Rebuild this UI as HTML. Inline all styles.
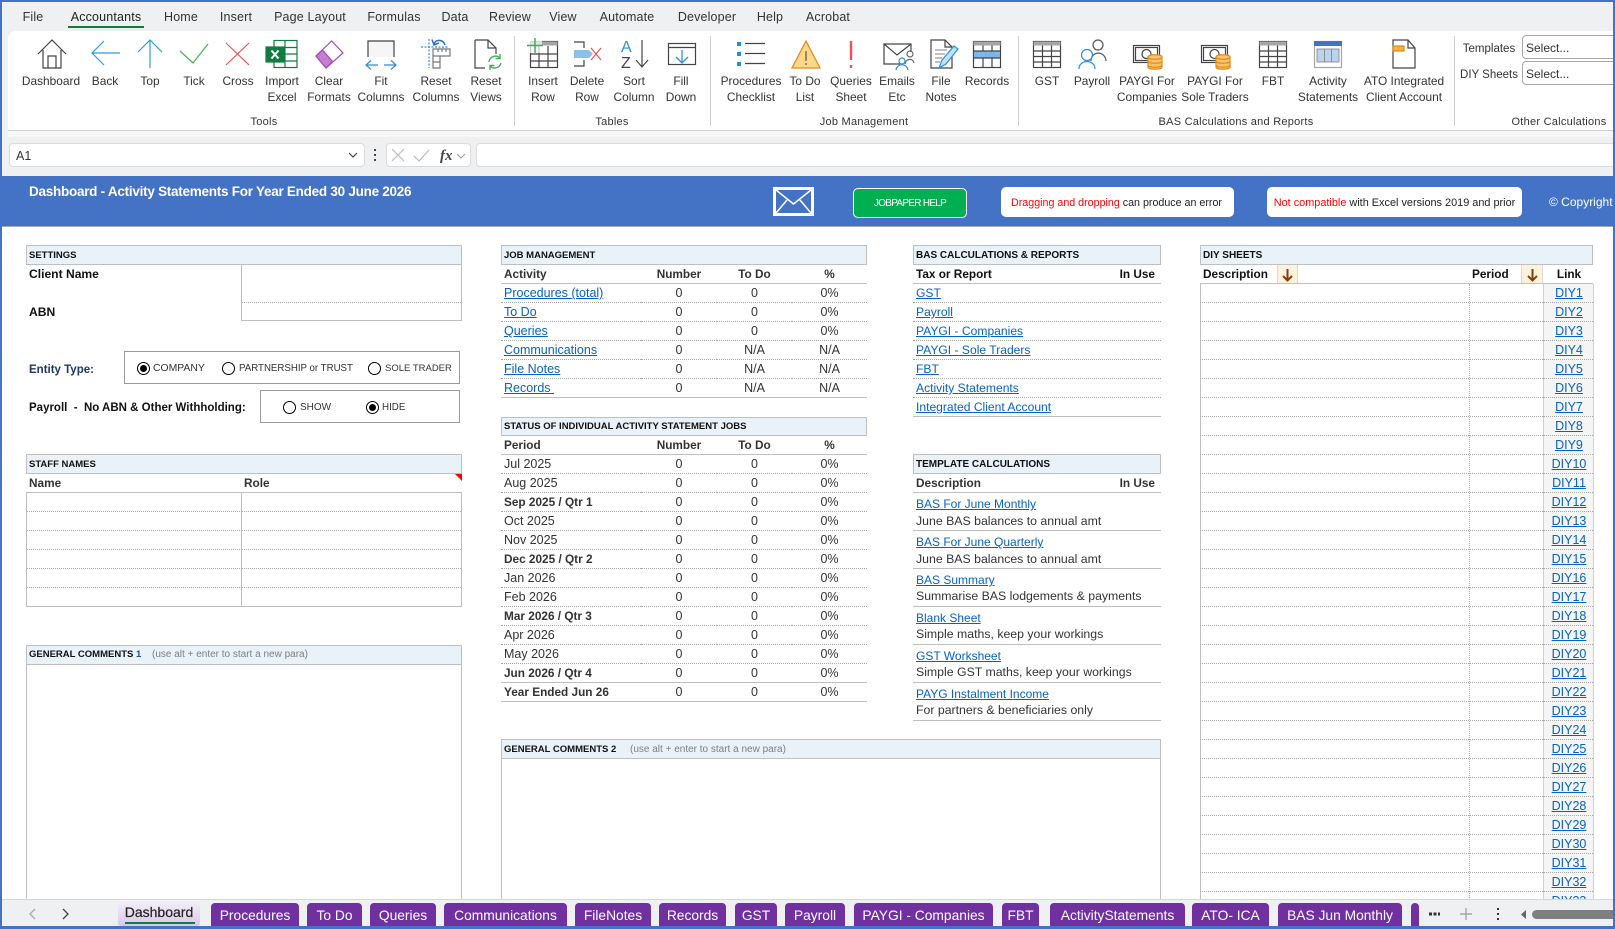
<!DOCTYPE html>
<html><head><meta charset="utf-8"><title>Dashboard</title>
<style>
html,body{margin:0;padding:0;background:#fff}
#p{position:relative;width:1615px;height:929px;overflow:hidden;background:#fff;font-family:"Liberation Sans",Arial,sans-serif;color:#333;font-size:12.5px}
#p div,#p span.a,#p svg,#p table{position:absolute}
.m{top:8px;line-height:18px;font-size:12.5px;letter-spacing:.15px;transform:translateX(-50%);white-space:nowrap;color:#333}
.l{top:73px;line-height:16px;font-size:11.9px;transform:translateX(-50%);text-align:center;white-space:nowrap;color:#333}
.g{top:115px;line-height:14px;font-size:11px;letter-spacing:.25px;transform:translateX(-50%);white-space:nowrap;color:#333}
.sep{top:36px;width:1px;height:90px;background:#cfcfcf}
.i{top:38px;width:32px;height:32px;overflow:visible;fill:none;stroke-width:1.2}
.h{height:20px;box-sizing:border-box;background:#e9f1f9;border:1px solid #bfbfbf;font-weight:bold;font-size:9.5px;line-height:19px;padding-left:2px;color:#111;white-space:nowrap}
.t{white-space:nowrap;line-height:19px;height:19px}
.b{font-weight:bold;font-size:11.8px}
.s{height:0;border-top:1px solid #bfbfbf}
.r{width:13px;height:13px;box-sizing:border-box;border:1px solid #000;border-radius:50%;background:#fff}
.r.on:after{content:"";position:absolute;left:2px;top:2px;width:7px;height:7px;background:#000;border-radius:50%}
.rt{line-height:14px;white-space:nowrap;color:#333}
table{border-collapse:separate;border-spacing:0;table-layout:fixed;font-size:12.5px}
td{height:19px;box-sizing:border-box;padding:0;border-bottom:1px dotted #a6a6a6;white-space:nowrap;line-height:18px;color:#333}
td.c{text-align:center}
tr.k td{font-weight:bold;font-size:11.8px}
td b{font-size:11.8px}
tr.e td{border-bottom:1px solid #bfbfbf}
td a,.t a{color:#0563c1;text-decoration:underline}
.bl td{font-size:12.1px}
.tl a{font-size:12px}
.td{font-size:12.3px}
.tab{top:903px;height:24px;box-sizing:border-box;background:#7030a0;color:#fff;border-radius:4px 4px 0 0;font-size:13.8px;line-height:25px;text-align:center;white-space:nowrap;overflow:hidden}
</style></head><body><div id="p">

<!-- top chrome -->
<div style="left:0;top:0;width:1615px;height:176px;background:#eef0f2"></div>
<div class="m" style="left:33px">File</div>
<div class="m" style="left:106px;color:#222">Accountants</div>
<div style="left:68px;top:26px;width:76px;height:2px;background:#107c41"></div>
<div class="m" style="left:181px">Home</div>
<div class="m" style="left:236px">Insert</div>
<div class="m" style="left:310px">Page Layout</div>
<div class="m" style="left:394px">Formulas</div>
<div class="m" style="left:455px">Data</div>
<div class="m" style="left:510px">Review</div>
<div class="m" style="left:563px">View</div>
<div class="m" style="left:627px">Automate</div>
<div class="m" style="left:707px">Developer</div>
<div class="m" style="left:770px">Help</div>
<div class="m" style="left:828px">Acrobat</div>

<div style="left:8px;top:31px;width:1607px;height:99px;background:#fff;border-radius:8px 0 0 0;border-bottom:1px solid #cfcfcf"></div>
<div style="left:8px;top:131px;width:1607px;height:6px;background:#f7f7f7"></div>

<div class="sep" style="left:514px"></div><div class="sep" style="left:710px"></div><div class="sep" style="left:1018px"></div><div class="sep" style="left:1454px"></div>

<!-- icons -->
<svg class="i" style="left:36px" viewBox="0 0 32 32" stroke="#444"><path d="M2 16L16 2L30 16M7 12V30H25V12M12 30V18H20V30"/></svg>
<svg class="i" style="left:90px" viewBox="0 0 32 32" stroke="#2e9bda"><path d="M2 15H30M14 3L2 15L14 27"/></svg>
<svg class="i" style="left:134px" viewBox="0 0 32 32" stroke="#2e9bda"><path d="M16 2V30M4 14L16 2L28 14"/></svg>
<svg class="i" style="left:178px" viewBox="0 0 32 32" stroke="#4caf50"><path d="M2 13L15 25L30 6"/></svg>
<svg class="i" style="left:222px" viewBox="0 0 32 32" stroke="#f2504b"><path d="M4 5L27 27M27 5L4 27"/></svg>
<svg class="i" style="left:266px" viewBox="0 0 32 32" stroke="#107c41"><rect x="8" y="2.5" width="23" height="27" fill="#fff"/><path d="M19 2.5V29.5M8 9.5H31M8 16H31M8 23H31"/><rect x="0" y="9" width="18" height="15" fill="#107c41"/><path d="M5.5 12.5L12.5 20.5M12.5 12.5L5.5 20.5" stroke="#fff" stroke-width="2"/></svg>
<svg class="i" style="left:313px" viewBox="0 0 32 32" stroke="#9b4fb0"><path d="M18.6 3L30 15L13 30L3 18Z" fill="#fff"/><path d="M3 18L9.5 12L19.5 23.5L13 30Z" fill="#c77dd0"/></svg>
<svg class="i" style="left:365px" viewBox="0 0 32 32"><path d="M3 19V3H29V19" stroke="#444" fill="#f6f6f6"/><path d="M1 27H13M19 27H31M6 22.5L1 27L6 31.5M26 22.5L31 27L26 31.5" stroke="#2e8fd8"/></svg>
<svg class="i" style="left:420px" viewBox="0 0 32 32"><path d="M1 9H29M9 1V30" stroke="#2e8fd8" stroke-dasharray="2 1.5"/><path d="M13 11H30V18H20V30H13Z" stroke="#777"/><path d="M13 18H20M13 24H20M18 11V14M22 11V14M26 11V14" stroke="#777"/><path d="M25 7C23 1 16 1 14 6M12 1.500L14 7L19 5" stroke="#2e6fc0" stroke-width="1.500"/></svg>
<svg class="i" style="left:470px" viewBox="0 0 32 32"><path d="M5 2H18L26 10V16M18 2V10H26M5 2V30H15" stroke="#444"/><path d="M19 24A6.500 6.500 0 0 1 30 20M31 25A6.500 6.500 0 0 1 20 28M30 16V20.500H25.500M20 32V27.500H24.500" stroke="#3fae5c" stroke-width="1.400"/></svg>

<svg class="i" style="left:527px" viewBox="0 0 32 32" stroke="#444"><rect x="3.500" y="3.500" width="27" height="26"/><rect x="3.500" y="3.500" width="27" height="4" fill="#a6a6a6" stroke="none"/><path d="M3.500 16H30.500M3.500 23H30.500M12 8V29.500M21 8V29.500"/><rect x="0" y="0" width="15" height="15" fill="#fff" stroke="none" opacity=".7"/><path d="M0 7.500H16M8 0V16" stroke="#3fae5c" stroke-width="1.500"/></svg>
<svg class="i" style="left:571px" viewBox="0 0 32 32"><path d="M3 4H13V10M3 28H13V22" stroke="#444"/><path d="M3 12H18L22 16L18 20H3Z" fill="#8cc0eb" stroke="none"/><path d="M20 10L30 22M30 10L20 22" stroke="#f2504b"/></svg>
<svg class="i" style="left:618px" viewBox="0 0 32 32"><text x="3" y="14" font-size="16" fill="#2e8fd8" stroke="none" font-family="Liberation Sans">A</text><text x="3" y="30" font-size="16" fill="#444" stroke="none" font-family="Liberation Sans">Z</text><path d="M24 2V29M18 22L24 29L30 22" stroke="#444"/></svg>
<svg class="i" style="left:665px" viewBox="0 0 32 32" stroke="#444"><rect x="3.500" y="5.500" width="27" height="21"/><path d="M3.500 9.500H30.500"/><path d="M17 12V25M11 19L17 25L23 19" stroke="#2e8fd8" stroke-width="1.300"/></svg>

<svg class="i" style="left:735px" viewBox="0 0 32 32"><rect x="2" y="4" width="4" height="4" fill="#1f8fd8"/><rect x="2" y="14" width="4" height="4" fill="#1f8fd8"/><rect x="2" y="24" width="4" height="4" fill="#1f8fd8"/><path d="M10 5.500H30M10 15.500H30M10 25.500H30" stroke="#444"/></svg>
<svg class="i" style="left:790px" viewBox="0 0 32 32"><path d="M16 3L30 30H2Z" fill="#fbd88a" stroke="#e38b1f" stroke-width="1.300"/><path d="M16 13V23M16 25V27" stroke="#555"/></svg>
<svg class="i" style="left:835px" viewBox="0 0 32 32"><path d="M16 3V22M16 27V30" stroke="#f05050" stroke-width="2.400"/></svg>
<svg class="i" style="left:881px" viewBox="0 0 32 32"><path d="M19 26H3V6H30V14M3 6L16 17L30 6" stroke="#444"/><circle cx="29" cy="16" r="3" stroke="#666"/><path d="M24 26C25 20 32 20 33 25" stroke="#666"/><circle cx="21" cy="23" r="3" stroke="#2e8fd8"/><path d="M15 32C16 25 26 25 27 32" stroke="#2e8fd8"/></svg>
<svg class="i" style="left:928px" viewBox="0 0 32 32"><path d="M3 2H17L24 9V30H3ZM17 2V9H24" stroke="#444"/><path d="M7 12H19M7 16H17M7 20H14M7 24H12" stroke="#999"/><path d="M11 30L14 22L26 8L30 11L18 26Z" fill="#bfe0f5" stroke="#2e8fd8"/></svg>
<svg class="i" style="left:971px" viewBox="0 0 32 32" stroke="#444"><rect x="2.500" y="3.500" width="27" height="26"/><rect x="2.500" y="3.500" width="27" height="4" fill="#a6a6a6" stroke="none"/><rect x="3" y="13" width="26" height="7" fill="#7db6e8" stroke="none"/><path d="M2.500 13H29.500M2.500 20H29.500M12 7.500V13M21 7.500V13M12 20V29.500M21 20V29.500"/></svg>

<svg class="i" style="left:1031px" viewBox="0 0 32 32" stroke="#444"><rect x="2.500" y="3.500" width="27" height="26"/><rect x="2.500" y="3.500" width="27" height="4" fill="#a6a6a6" stroke="none"/><path d="M2.500 13H29.500M2.500 18.500H29.500M2.500 24H29.500M11.500 7.500V29.500M20.500 7.500V29.500"/></svg>
<svg class="i" style="left:1076px" viewBox="0 0 32 32"><circle cx="22" cy="7" r="5" stroke="#555"/><path d="M15 23C15 13 29 12 30 23" stroke="#555"/><circle cx="11" cy="17" r="5.500" stroke="#2e8fd8"/><path d="M3 31C3 21 19 21 19 31" stroke="#2e8fd8" fill="#fff"/></svg>
<svg class="i" style="left:1131px" viewBox="0 0 32 32"><rect x="2.500" y="7.500" width="26" height="17" stroke="#444"/><rect x="4.500" y="9.500" width="22" height="13" stroke="#444"/><circle cx="15.500" cy="16" r="4.500" stroke="#444"/><path d="M17 19C17 16 31 16 31 19V29C31 32 17 32 17 29Z" fill="#f7c46c" stroke="#e58a1a"/><path d="M17 19C17 22 31 22 31 19M17 23C17 26 31 26 31 23M17 27C17 30 31 30 31 27" stroke="#e58a1a"/></svg>
<svg class="i" style="left:1199px" viewBox="0 0 32 32"><rect x="2.500" y="7.500" width="26" height="17" stroke="#444"/><rect x="4.500" y="9.500" width="22" height="13" stroke="#444"/><circle cx="15.500" cy="16" r="4.500" stroke="#444"/><path d="M17 19C17 16 31 16 31 19V29C31 32 17 32 17 29Z" fill="#f7c46c" stroke="#e58a1a"/><path d="M17 19C17 22 31 22 31 19M17 23C17 26 31 26 31 23M17 27C17 30 31 30 31 27" stroke="#e58a1a"/></svg>
<svg class="i" style="left:1257px" viewBox="0 0 32 32" stroke="#444"><rect x="2.500" y="3.500" width="27" height="26"/><rect x="2.500" y="3.500" width="27" height="4" fill="#a6a6a6" stroke="none"/><path d="M2.500 13H29.500M2.500 18.500H29.500M2.500 24H29.500M11.500 7.500V29.500M20.500 7.500V29.500"/></svg>
<svg class="i" style="left:1312px" viewBox="0 0 32 32"><rect x="2.500" y="3.500" width="27" height="26" stroke="#a6a6a6"/><rect x="2" y="3" width="28" height="5" fill="#4472c4"/><rect x="5" y="11" width="22" height="13" fill="#bcd3ee" stroke="#7f7f7f" stroke-width=".8"/><path d="M12.500 11V24M19.500 11V24" stroke="#7f7f7f" stroke-width=".8"/></svg>
<svg class="i" style="left:1388px" viewBox="0 0 32 32"><path d="M5 2H20L27 10V30H5ZM20 2V10H27" stroke="#444"/><rect x="5" y="8" width="11" height="5" fill="#f7b24a" stroke="#e08a00"/></svg>

<!-- ribbon labels -->
<div class="l" style="left:51px">Dashboard</div>
<div class="l" style="left:105px">Back</div>
<div class="l" style="left:150px">Top</div>
<div class="l" style="left:194px">Tick</div>
<div class="l" style="left:238px">Cross</div>
<div class="l" style="left:282px">Import<br>Excel</div>
<div class="l" style="left:329px">Clear<br>Formats</div>
<div class="l" style="left:381px">Fit<br>Columns</div>
<div class="l" style="left:436px">Reset<br>Columns</div>
<div class="l" style="left:486px">Reset<br>Views</div>
<div class="l" style="left:543px">Insert<br>Row</div>
<div class="l" style="left:587px">Delete<br>Row</div>
<div class="l" style="left:634px">Sort<br>Column</div>
<div class="l" style="left:681px">Fill<br>Down</div>
<div class="l" style="left:751px">Procedures<br>Checklist</div>
<div class="l" style="left:805px">To Do<br>List</div>
<div class="l" style="left:851px">Queries<br>Sheet</div>
<div class="l" style="left:897px">Emails<br>Etc</div>
<div class="l" style="left:941px">File<br>Notes</div>
<div class="l" style="left:987px">Records</div>
<div class="l" style="left:1047px">GST</div>
<div class="l" style="left:1092px">Payroll</div>
<div class="l" style="left:1147px">PAYGI For<br>Companies</div>
<div class="l" style="left:1215px">PAYGI For<br>Sole Traders</div>
<div class="l" style="left:1273px">FBT</div>
<div class="l" style="left:1328px">Activity<br>Statements</div>
<div class="l" style="left:1404px">ATO Integrated<br>Client Account</div>
<div class="g" style="left:264px">Tools</div>
<div class="g" style="left:612px">Tables</div>
<div class="g" style="left:864px">Job Management</div>
<div class="g" style="left:1236px">BAS Calculations and Reports</div>
<div class="g" style="left:1559px">Other Calculations</div>
<div class="l" style="left:1489px;top:41px;font-size:11.5px">Templates</div>
<div class="l" style="left:1489px;top:67px;font-size:11.5px">DIY Sheets</div>
<div style="left:1522px;top:35px;width:100px;height:24px;box-sizing:border-box;border:1px solid #a6a6a6;border-radius:4px;background:#fff;font-size:12px;line-height:24px;padding-left:3px">Select...</div>
<div style="left:1522px;top:61px;width:100px;height:24px;box-sizing:border-box;border:1px solid #a6a6a6;border-radius:4px;background:#fff;font-size:12px;line-height:24px;padding-left:3px">Select...</div>

<!-- formula bar -->
<div style="left:9px;top:143px;width:356px;height:24px;box-sizing:border-box;background:#fff;border:1px solid #dcdcdc;border-radius:4px;font-size:12.500px;line-height:24px;padding-left:6px">A1</div>
<svg style="left:347px;top:151px;width:12px;height:8px" viewBox="0 0 12 8"><path d="M2 2L6 6L10 2" fill="none" stroke="#444" stroke-width="1.200"/></svg>
<svg style="left:373px;top:148px;width:4px;height:14px" viewBox="0 0 4 14" fill="#444"><rect x="1" y="1" width="2" height="2"/><rect x="1" y="6" width="2" height="2"/><rect x="1" y="11" width="2" height="2"/></svg>
<div style="left:386px;top:143px;width:85px;height:24px;box-sizing:border-box;background:#fff;border:1px solid #dcdcdc;border-radius:4px"></div>
<svg style="left:391px;top:148px;width:76px;height:15px;overflow:visible" viewBox="0 0 76 15"><path d="M1 1L13 13M13 1L1 13M23 8L28 13L38 2" fill="none" stroke="#bbb" stroke-width="1.200"/><text x="49" y="12" font-family="Liberation Serif" font-style="italic" font-weight="bold" font-size="15" fill="#444">fx</text><path d="M66 6L70 10L74 6" fill="none" stroke="#999"/></svg>
<div style="left:476px;top:143px;width:1139px;height:24px;box-sizing:border-box;background:#fff;border:1px solid #dcdcdc;border-radius:4px 0 0 4px"></div>

<!-- blue band -->
<div style="left:0;top:176px;width:1615px;height:50px;background:#4472c4"></div>
<div style="left:0;top:226px;width:1615px;height:1px;background:#a9a9a9"></div>
<div style="left:29px;top:183px;line-height:18px;font-size:13.5px;font-weight:bold;color:#fff;white-space:nowrap;letter-spacing:-.26px">Dashboard - Activity Statements For Year Ended 30 June 2026</div>
<svg style="left:773px;top:187px;width:41px;height:29px" viewBox="0 0 41 29" fill="none" stroke="#fff"><rect x="1.500" y="1.500" width="38" height="26" stroke-width="3"/><path d="M3 3L20.500 17L38 3M3 26L14 13M38 26L27 13" stroke-width="1.500"/></svg>
<div style="left:853px;top:188px;width:114px;height:30px;box-sizing:border-box;background:#00b050;border:1px solid #fff;border-radius:5px;color:#fff;font-size:10px;line-height:29px;text-align:center;letter-spacing:-.72px">JOBPAPER HELP</div>
<div style="left:1001px;top:187px;width:231px;height:30px;padding-right:2px;background:#fff;border-radius:5px;font-size:10.7px;line-height:32px;text-align:center;color:#222;white-space:nowrap"><span style="color:#f00">Dragging and dropping</span> can produce an error</div>
<div style="left:1267px;top:187px;width:255px;height:30px;background:#fff;border-radius:5px;font-size:10.9px;line-height:32px;text-align:center;color:#222;white-space:nowrap"><span style="color:#f00">Not compatible</span> with Excel versions 2019 and prior</div>
<div style="left:1549px;top:194px;font-size:12px;line-height:16px;color:#fff;white-space:nowrap">© Copyright</div>

<!-- SETTINGS -->
<div class="h" style="left:26px;top:245px;width:436px">SETTINGS</div>
<div class="t b" style="left:29px;top:265px;color:#111;font-size:12.1px">Client Name</div>
<div class="t b" style="left:29px;top:303px;color:#111;font-size:12.1px">ABN</div>
<div style="left:241px;top:264px;width:221px;height:57px;box-sizing:border-box;border:1px solid #bfbfbf;border-top:0"></div>
<div style="left:242px;top:302px;width:219px;height:0;border-top:1px dotted #a6a6a6"></div>
<div class="t b" style="left:29px;top:361px;color:#1f3864;font-size:11.5px">Entity Type:</div>
<div style="left:124px;top:351px;width:336px;height:33px;box-sizing:border-box;border:1px solid #999"></div>
<div class="r on" style="left:137px;top:362px"></div><div class="rt" style="left:153px;top:362px;font-size:10.4px">COMPANY</div>
<div class="r" style="left:222px;top:362px"></div><div class="rt" style="left:239px;top:362px;font-size:9.7px">PARTNERSHIP or TRUST</div>
<div class="r" style="left:368px;top:362px"></div><div class="rt" style="left:385px;top:362px;font-size:9.5px">SOLE TRADER</div>
<div class="t b" style="left:29px;top:399px;color:#111;font-size:11.5px">Payroll&nbsp; -&nbsp; No ABN &amp; Other Withholding:</div>
<div style="left:260px;top:390px;width:200px;height:33px;box-sizing:border-box;border:1px solid #999"></div>
<div class="r" style="left:283px;top:401px"></div><div class="rt" style="left:300px;top:401px;font-size:10px">SHOW</div>
<div class="r on" style="left:366px;top:401px"></div><div class="rt" style="left:382px;top:401px;font-size:9.8px">HIDE</div>

<!-- STAFF -->
<div class="h" style="left:26px;top:454px;width:436px">STAFF NAMES</div>
<div class="t b" style="left:29px;top:474px">Name</div>
<div class="t b" style="left:244px;top:474px">Role</div>
<svg style="left:455px;top:474px;width:7px;height:7px" viewBox="0 0 7 7"><path d="M0 0H7V7Z" fill="#f00"/></svg>
<table style="left:26px;top:492px;width:436px;border-top:1px solid #bfbfbf;border-left:1px solid #bfbfbf;border-right:1px solid #bfbfbf;box-sizing:border-box">
<colgroup><col style="width:215px"><col></colgroup>
<tr><td style="border-right:1px solid #bfbfbf"></td><td></td></tr>
<tr><td style="border-right:1px solid #bfbfbf"></td><td></td></tr>
<tr><td style="border-right:1px solid #bfbfbf"></td><td></td></tr>
<tr><td style="border-right:1px solid #bfbfbf"></td><td></td></tr>
<tr><td style="border-right:1px solid #bfbfbf"></td><td></td></tr>
<tr class="e"><td style="border-right:1px solid #bfbfbf"></td><td></td></tr>
</table>

<!-- GENERAL COMMENTS 1 -->
<div class="h" style="left:26px;top:645px;width:436px;line-height:17px">GENERAL COMMENTS <span style="color:#1f4e9c">1</span></div>
<div style="left:152px;top:647px;font-size:10px;line-height:15px;color:#7f7f7f;white-space:nowrap">(use alt + enter to start a new para)</div>
<div style="left:26px;top:665px;width:436px;height:235px;box-sizing:border-box;border:1px solid #bfbfbf;border-top:0;border-bottom:0"></div>

<!-- JOB MANAGEMENT -->
<div class="h" style="left:501px;top:245px;width:366px">JOB MANAGEMENT</div>
<table style="left:501px;top:265px;width:366px">
<colgroup><col style="width:140px"><col style="width:76px"><col style="width:75px"><col style="width:75px"></colgroup>
<tr class="k e"><td style="padding-left:3px">Activity</td><td class="c">Number</td><td class="c">To Do</td><td class="c">%</td></tr>
<tr><td style="padding-left:3px"><a>Procedures (total)</a></td><td class="c">0</td><td class="c">0</td><td class="c">0%</td></tr>
<tr><td style="padding-left:3px"><a>To Do</a></td><td class="c">0</td><td class="c">0</td><td class="c">0%</td></tr>
<tr><td style="padding-left:3px"><a>Queries</a></td><td class="c">0</td><td class="c">0</td><td class="c">0%</td></tr>
<tr><td style="padding-left:3px"><a>Communications</a></td><td class="c">0</td><td class="c">N/A</td><td class="c">N/A</td></tr>
<tr><td style="padding-left:3px"><a>File Notes</a></td><td class="c">0</td><td class="c">N/A</td><td class="c">N/A</td></tr>
<tr class="e"><td style="padding-left:3px"><a>Records&nbsp;</a></td><td class="c">0</td><td class="c">N/A</td><td class="c">N/A</td></tr>
</table>

<div class="h" style="left:501px;top:417px;width:366px;height:19px;line-height:17px">STATUS OF INDIVIDUAL ACTIVITY STATEMENT JOBS</div>
<table style="left:501px;top:436px;width:366px">
<colgroup><col style="width:140px"><col style="width:76px"><col style="width:75px"><col style="width:75px"></colgroup>
<tr class="k e"><td style="padding-left:3px">Period</td><td class="c">Number</td><td class="c">To Do</td><td class="c">%</td></tr>
<tr><td style="padding-left:3px">Jul 2025</td><td class="c">0</td><td class="c">0</td><td class="c">0%</td></tr>
<tr><td style="padding-left:3px">Aug 2025</td><td class="c">0</td><td class="c">0</td><td class="c">0%</td></tr>
<tr><td style="padding-left:3px"><b>Sep 2025 / Qtr 1</b></td><td class="c">0</td><td class="c">0</td><td class="c">0%</td></tr>
<tr><td style="padding-left:3px">Oct 2025</td><td class="c">0</td><td class="c">0</td><td class="c">0%</td></tr>
<tr><td style="padding-left:3px">Nov 2025</td><td class="c">0</td><td class="c">0</td><td class="c">0%</td></tr>
<tr><td style="padding-left:3px"><b>Dec 2025 / Qtr 2</b></td><td class="c">0</td><td class="c">0</td><td class="c">0%</td></tr>
<tr><td style="padding-left:3px">Jan 2026</td><td class="c">0</td><td class="c">0</td><td class="c">0%</td></tr>
<tr><td style="padding-left:3px">Feb 2026</td><td class="c">0</td><td class="c">0</td><td class="c">0%</td></tr>
<tr><td style="padding-left:3px"><b>Mar 2026 / Qtr 3</b></td><td class="c">0</td><td class="c">0</td><td class="c">0%</td></tr>
<tr><td style="padding-left:3px">Apr 2026</td><td class="c">0</td><td class="c">0</td><td class="c">0%</td></tr>
<tr><td style="padding-left:3px">May 2026</td><td class="c">0</td><td class="c">0</td><td class="c">0%</td></tr>
<tr class="e"><td style="padding-left:3px"><b>Jun 2026 / Qtr 4</b></td><td class="c">0</td><td class="c">0</td><td class="c">0%</td></tr>
<tr class="e"><td style="padding-left:3px"><b>Year Ended Jun 26</b></td><td class="c">0</td><td class="c">0</td><td class="c">0%</td></tr>
</table>

<!-- GENERAL COMMENTS 2 -->
<div class="h" style="left:501px;top:739px;width:660px">GENERAL COMMENTS 2</div>
<div style="left:630px;top:742px;font-size:10px;line-height:15px;color:#7f7f7f;white-space:nowrap">(use alt + enter to start a new para)</div>
<div style="left:501px;top:759px;width:660px;height:141px;box-sizing:border-box;border:1px solid #bfbfbf;border-top:0;border-bottom:0"></div>

<!-- BAS -->
<div class="h" style="left:913px;top:245px;width:248px;font-size:10px">BAS CALCULATIONS &amp; REPORTS</div>
<table class="bl" style="left:913px;top:265px;width:248px">
<colgroup><col style="width:248px"></colgroup>
<tr class="k e"><td style="padding-left:3px;padding-right:6px;color:#111">Tax or Report<span style="float:right">In Use</span></td></tr>
<tr><td style="padding-left:3px"><a>GST</a></td></tr>
<tr><td style="padding-left:3px"><a>Payroll</a></td></tr>
<tr><td style="padding-left:3px"><a>PAYGI - Companies</a></td></tr>
<tr><td style="padding-left:3px"><a>PAYGI - Sole Traders</a></td></tr>
<tr><td style="padding-left:3px"><a>FBT</a></td></tr>
<tr><td style="padding-left:3px"><a>Activity Statements</a></td></tr>
<tr class="e"><td style="padding-left:3px"><a>Integrated Client Account</a></td></tr>
</table>

<!-- TEMPLATE -->
<div class="h" style="left:913px;top:454px;width:248px;font-size:10px">TEMPLATE CALCULATIONS</div>
<div class="s" style="left:913px;top:492px;width:248px"></div>
<div class="t b" style="left:916px;top:474px">Description</div>
<div class="t b" style="left:1155px;top:474px;transform:translateX(-100%)">In Use</div>
<div class="t tl" style="left:916px;top:495px"><a>BAS For June Monthly</a></div>
<div class="t td" style="left:916px;top:512px">June BAS balances to annual amt</div>
<div class="s" style="left:913px;top:530px;width:248px"></div>
<div class="t tl" style="left:916px;top:533px"><a>BAS For June Quarterly</a></div>
<div class="t td" style="left:916px;top:550px">June BAS balances to annual amt</div>
<div class="s" style="left:913px;top:568px;width:248px"></div>
<div class="t tl" style="left:916px;top:571px"><a>BAS Summary</a></div>
<div class="t td" style="left:916px;top:587px">Summarise BAS lodgements &amp; payments</div>
<div class="s" style="left:913px;top:606px;width:248px"></div>
<div class="t tl" style="left:916px;top:609px"><a>Blank Sheet</a></div>
<div class="t td" style="left:916px;top:625px">Simple maths, keep your workings</div>
<div class="s" style="left:913px;top:644px;width:248px"></div>
<div class="t tl" style="left:916px;top:647px"><a>GST Worksheet</a></div>
<div class="t td" style="left:916px;top:663px">Simple GST maths, keep your workings</div>
<div class="s" style="left:913px;top:682px;width:248px"></div>
<div class="t tl" style="left:916px;top:685px"><a>PAYG Instalment Income</a></div>
<div class="t td" style="left:916px;top:701px">For partners &amp; beneficiaries only</div>
<div class="s" style="left:913px;top:720px;width:248px"></div>

<!-- DIY -->
<div class="h" style="left:1200px;top:245px;width:393px;font-size:10px">DIY SHEETS</div>
<div class="t b" style="left:1203px;top:265px;color:#111">Description</div>
<div class="t b" style="left:1472px;top:265px;color:#111">Period</div>
<div class="t b" style="left:1569px;top:265px;color:#111;transform:translateX(-50%)">Link</div>
<div style="left:1277px;top:265px;width:21px;height:19px;box-sizing:border-box;background:#fff2dc;border:1px solid #d9d9d9;border-top:0"></div>
<div style="left:1521px;top:265px;width:22px;height:19px;box-sizing:border-box;background:#fff2dc;border:1px solid #d9d9d9;border-top:0"></div>
<svg style="left:1281px;top:268px;width:13px;height:14px" viewBox="0 0 13 14" fill="none" stroke="#843c0c" stroke-width="2"><path d="M6.500 1V12M2 8L6.500 12.500L11 8"/></svg>
<svg style="left:1526px;top:268px;width:13px;height:14px" viewBox="0 0 13 14" fill="none" stroke="#843c0c" stroke-width="2"><path d="M6.500 1V12M2 8L6.500 12.500L11 8"/></svg>
<div class="s" style="left:1200px;top:283px;width:393px"></div>
<div style="left:1543px;top:284px;width:50px;height:620px;background:#f5f5f5"></div>
<div style="left:1200px;top:284px;width:0;height:620px;border-left:1px solid #bfbfbf"></div>
<div style="left:1469px;top:284px;width:0;height:620px;border-left:1px dotted #a6a6a6"></div>
<div style="left:1543px;top:284px;width:0;height:620px;border-left:1px solid #d0d0d0"></div>
<div style="left:1593px;top:284px;width:0;height:620px;border-left:1px solid #d0d0d0"></div>
<table style="left:1200px;top:284px;width:393px">
<colgroup><col style="width:343px"><col style="width:50px"></colgroup>
<tr><td></td><td class="c" style="padding-left:2px"><a>DIY1</a></td></tr>
<tr><td></td><td class="c" style="padding-left:2px"><a>DIY2</a></td></tr>
<tr><td></td><td class="c" style="padding-left:2px"><a>DIY3</a></td></tr>
<tr><td></td><td class="c" style="padding-left:2px"><a>DIY4</a></td></tr>
<tr><td></td><td class="c" style="padding-left:2px"><a>DIY5</a></td></tr>
<tr><td></td><td class="c" style="padding-left:2px"><a>DIY6</a></td></tr>
<tr><td></td><td class="c" style="padding-left:2px"><a>DIY7</a></td></tr>
<tr><td></td><td class="c" style="padding-left:2px"><a>DIY8</a></td></tr>
<tr><td></td><td class="c" style="padding-left:2px"><a>DIY9</a></td></tr>
<tr><td></td><td class="c" style="padding-left:2px"><a>DIY10</a></td></tr>
<tr><td></td><td class="c" style="padding-left:2px"><a>DIY11</a></td></tr>
<tr><td></td><td class="c" style="padding-left:2px"><a>DIY12</a></td></tr>
<tr><td></td><td class="c" style="padding-left:2px"><a>DIY13</a></td></tr>
<tr><td></td><td class="c" style="padding-left:2px"><a>DIY14</a></td></tr>
<tr><td></td><td class="c" style="padding-left:2px"><a>DIY15</a></td></tr>
<tr><td></td><td class="c" style="padding-left:2px"><a>DIY16</a></td></tr>
<tr><td></td><td class="c" style="padding-left:2px"><a>DIY17</a></td></tr>
<tr><td></td><td class="c" style="padding-left:2px"><a>DIY18</a></td></tr>
<tr><td></td><td class="c" style="padding-left:2px"><a>DIY19</a></td></tr>
<tr><td></td><td class="c" style="padding-left:2px"><a>DIY20</a></td></tr>
<tr><td></td><td class="c" style="padding-left:2px"><a>DIY21</a></td></tr>
<tr><td></td><td class="c" style="padding-left:2px"><a>DIY22</a></td></tr>
<tr><td></td><td class="c" style="padding-left:2px"><a>DIY23</a></td></tr>
<tr><td></td><td class="c" style="padding-left:2px"><a>DIY24</a></td></tr>
<tr><td></td><td class="c" style="padding-left:2px"><a>DIY25</a></td></tr>
<tr><td></td><td class="c" style="padding-left:2px"><a>DIY26</a></td></tr>
<tr><td></td><td class="c" style="padding-left:2px"><a>DIY27</a></td></tr>
<tr><td></td><td class="c" style="padding-left:2px"><a>DIY28</a></td></tr>
<tr><td></td><td class="c" style="padding-left:2px"><a>DIY29</a></td></tr>
<tr><td></td><td class="c" style="padding-left:2px"><a>DIY30</a></td></tr>
<tr><td></td><td class="c" style="padding-left:2px"><a>DIY31</a></td></tr>
<tr><td></td><td class="c" style="padding-left:2px"><a>DIY32</a></td></tr>
<tr><td></td><td class="c" style="padding-left:2px"><a>DIY33</a></td></tr>
</table>

<!-- sheet tabs -->
<div style="left:0;top:899px;width:1615px;height:27px;background:#eef0f2;border-top:1px solid #d6d6d6;box-sizing:border-box"></div>
<svg style="left:26px;top:907px;width:46px;height:14px" viewBox="0 0 46 14" fill="none"><path d="M9 2L4 7L9 12" stroke="#aaa" stroke-width="1.300"/><path d="M37 2L42 7L37 12" stroke="#444" stroke-width="1.300"/></svg>
<div style="left:118px;top:900px;width:82px;height:26px;border-radius:3px;background:linear-gradient(#f4f1f7,#d9c8e8);font-size:14px;line-height:25px;text-align:center;color:#222;-webkit-text-stroke:.2px #222">Dashboard</div>
<div style="left:125px;top:922px;width:70px;height:2px;background:#107c41"></div>
<div class="tab" style="left:211px;width:88px">Procedures</div>
<div class="tab" style="left:307px;width:55px">To Do</div>
<div class="tab" style="left:370px;width:66px">Queries</div>
<div class="tab" style="left:444px;width:123px">Communications</div>
<div class="tab" style="left:575px;width:76px">FileNotes</div>
<div class="tab" style="left:659px;width:67px">Records</div>
<div class="tab" style="left:735px;width:42px">GST</div>
<div class="tab" style="left:785px;width:60px">Payroll</div>
<div class="tab" style="left:854px;width:139px">PAYGI - Companies</div>
<div class="tab" style="left:1002px;width:37px">FBT</div>
<div class="tab" style="left:1050px;width:135px">ActivityStatements</div>
<div class="tab" style="left:1192px;width:77px">ATO- ICA</div>
<div class="tab" style="left:1278px;width:124px">BAS Jun Monthly</div>
<div class="tab" style="left:1411px;width:8px"></div>
<svg style="left:1424px;top:905px;width:100px;height:18px" viewBox="0 0 100 18" fill="none"><path d="M5 9H16" stroke="#333" stroke-width="3" stroke-dasharray="3 1.500"/><path d="M42 3V15M36 9H48" stroke="#999" stroke-width="1.200"/><rect x="73" y="3" width="2" height="2" fill="#333"/><rect x="73" y="8" width="2" height="2" fill="#333"/><rect x="73" y="13" width="2" height="2" fill="#333"/></svg>
<svg style="left:1518px;top:908px;width:97px;height:13px" viewBox="0 0 97 13"><path d="M8 2L3 6.500L8 11Z" fill="#666"/><rect x="14" y="2" width="90" height="9" rx="4.500" fill="#7f7f7f"/></svg>

<!-- window border -->
<div style="left:0;top:0;width:1615px;height:2px;background:#4472c4"></div>
<div style="left:0;top:0;width:2px;height:929px;background:#4472c4"></div>
<div style="left:1613px;top:0;width:2px;height:929px;background:#4472c4"></div>
<div style="left:0;top:926px;width:1615px;height:3px;background:#4472c4"></div>
</div></body></html>
